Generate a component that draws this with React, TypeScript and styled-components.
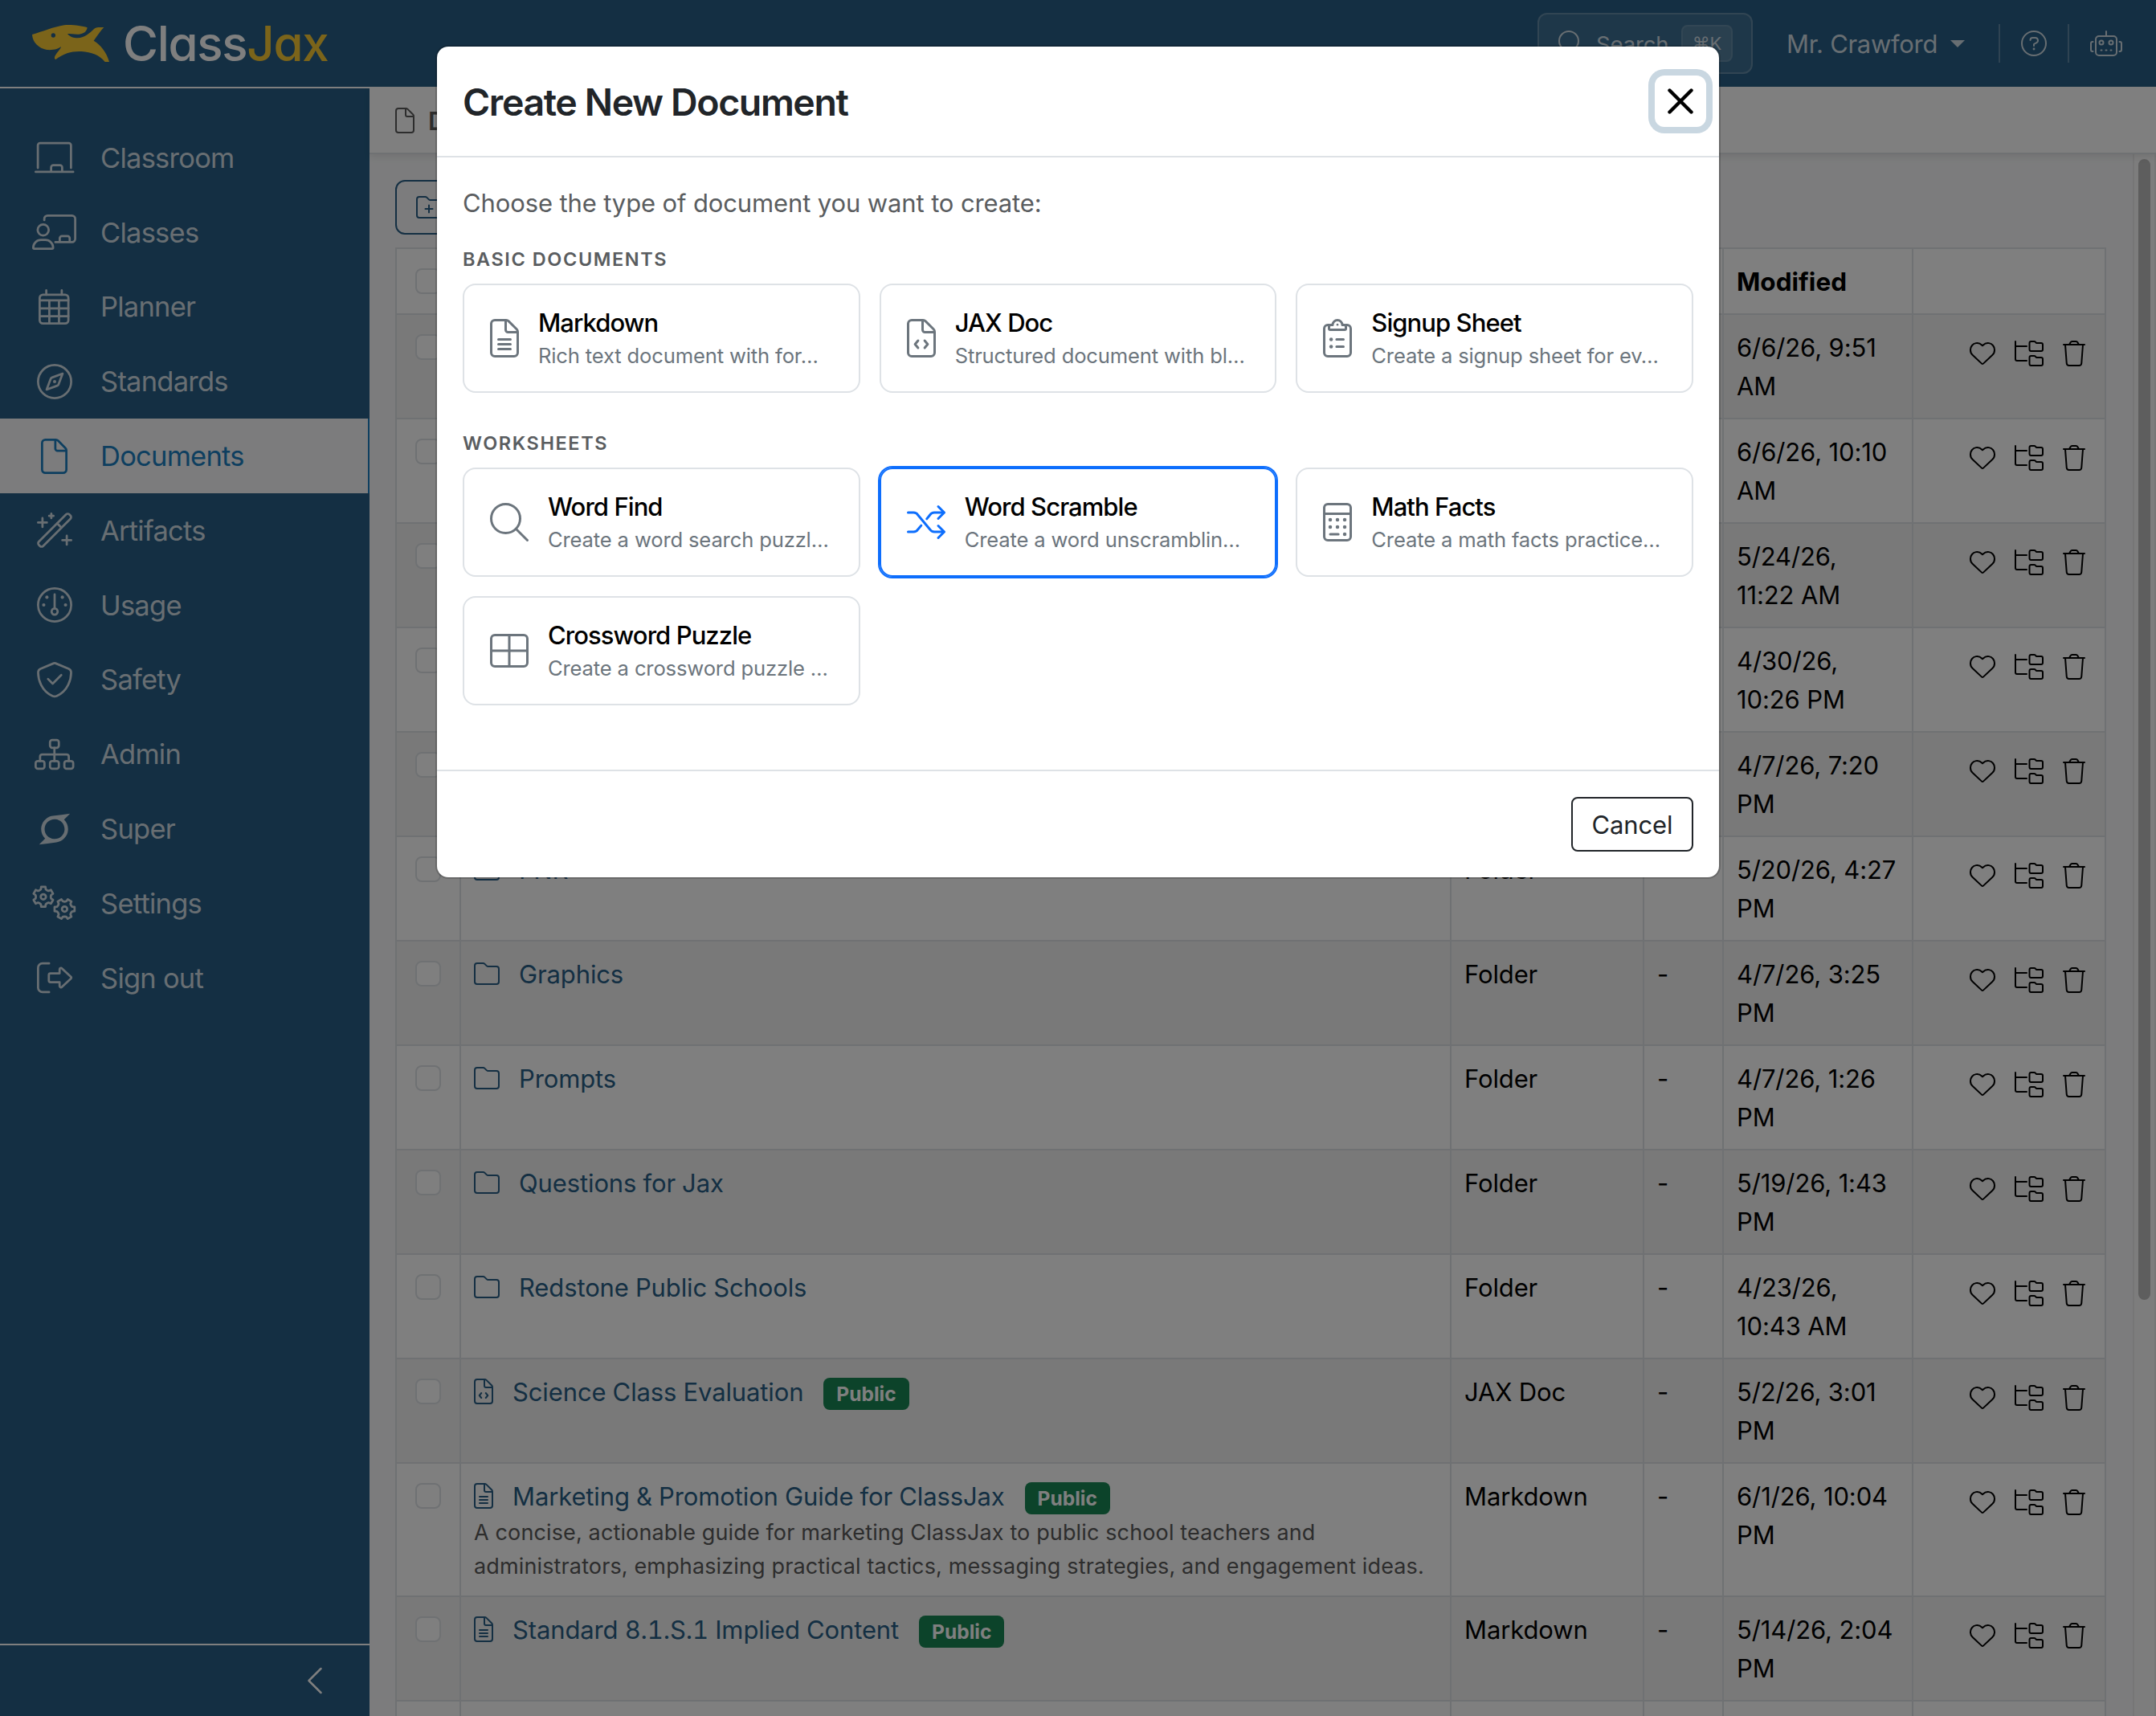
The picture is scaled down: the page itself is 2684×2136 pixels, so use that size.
import type { ReactNode } from 'react';
import styled, { createGlobalStyle, css } from 'styled-components';
import { BsChevronLeft } from 'react-icons/bs';
import { FaSuperpowers } from 'react-icons/fa';

const GlobalStyle = createGlobalStyle`
  * {
    box-sizing: border-box;
  }
  body {
    margin: 0;
    overflow: hidden;
    font-family: Inter, 'Liberation Sans', sans-serif;
    font-size: 31px;
    letter-spacing: -0.004em;
    color: #000;
    background: #f8f9fa;
  }
`;

/* ---------- icons ---------- */

const Svg = styled.svg`
  display: block;
  flex: none;
  fill: none;
  stroke: currentColor;
  stroke-width: 32;
  stroke-linecap: round;
  stroke-linejoin: round;
  overflow: visible;
  .dot {
    fill: currentColor;
    stroke: none;
  }
`;

const FILE =
  'M64 16H214a48 48 0 0 1 34 14L354 136a48 48 0 0 1 14 34V448a48 48 0 0 1-48 48H64a48 48 0 0 1-48-48V64a48 48 0 0 1 48-48zM208 16V144a32 32 0 0 0 32 32H368';
const FOLDER =
  'M64 464a48 48 0 0 1-48-48V96a48 48 0 0 1 48-48h117a48 48 0 0 1 34 14l36 36a48 48 0 0 0 34 14h163a48 48 0 0 1 48 48v256a48 48 0 0 1-48 48z';
const SMALL_FOLDER =
  'M328 208a32 32 0 0 1-32-32V48a32 32 0 0 1 32-32h62a32 32 0 0 1 24 11l12 12a32 32 0 0 0 24 9h78a32 32 0 0 1 32 32v96a32 32 0 0 1-32 32z';

function gear(cx: number, cy: number, turn: number) {
  const points: string[] = [];
  for (let i = 0; i < 6; i++) {
    [
      [-30, 108],
      [-18, 114],
      [-12, 148],
      [12, 148],
      [18, 114],
    ].forEach(([deg, r]) => {
      const a = ((i * 60 + deg + turn) * Math.PI) / 180;
      points.push(`${(cx + r * Math.sin(a)).toFixed(1)} ${(cy - r * Math.cos(a)).toFixed(1)}`);
    });
  }
  return `M${points.join('L')}z`;
}

const dots = (list: number[][], r = 24) =>
  list.map(([x, y]) => <circle key={`${x}-${y}`} className="dot" cx={x} cy={y} r={r} />);

const ICONS: Record<string, { width: number; body: ReactNode }> = {
  chalkboard: {
    width: 576,
    body: (
      <path d="M48 408V80a32 32 0 0 1 32-32H496a32 32 0 0 1 32 32V408M16 464H560M240 464V400a32 32 0 0 1 32-32h96a32 32 0 0 1 32 32v64" />
    ),
  },
  teacher: {
    width: 640,
    body: (
      <>
        <circle cx="160" cy="224" r="80" />
        <path d="M16 480c0-61 50-112 112-112h64c62 0 112 51 112 112a16 16 0 0 1-16 16H32a16 16 0 0 1-16-16zM176 80V64a48 48 0 0 1 48-48H576a48 48 0 0 1 48 48V352a48 48 0 0 1-48 48H336M400 400v-56a32 32 0 0 1 32-32h80a32 32 0 0 1 32 32v56" />
      </>
    ),
  },
  calendar: {
    width: 448,
    body: (
      <>
        <rect x="16" y="80" width="416" height="416" rx="48" />
        <path d="M16 160H432M16 277H432M16 390H432M156 160V496M296 160V496M112 16V80M336 16V80" />
      </>
    ),
  },
  compass: {
    width: 512,
    body: (
      <>
        <circle cx="256" cy="256" r="240" />
        <path d="M372 140L220 196a36 36 0 0 0-22 22L140 372L292 316a36 36 0 0 0 22-22z" />
        {dots([[256, 256]])}
      </>
    ),
  },
  file: { width: 384, body: <path d={FILE} /> },
  fileLines: {
    width: 384,
    body: <path d={`${FILE}M112 272H272M112 336H272M112 400H272`} />,
  },
  fileCode: {
    width: 384,
    body: <path d={`${FILE}M148 288l-40 48 40 48M236 288l40 48-40 48`} />,
  },
  wand: {
    width: 512,
    body: (
      <>
        <g transform="translate(256 256) rotate(-45)">
          <rect x="-312" y="-44" width="624" height="88" rx="32" />
          <path d="M96 -44V44" />
        </g>
        <path d="M80 80V208M16 144H144M208 16V80M176 48H240M432 336V464M368 400H496" />
      </>
    ),
  },
  gauge: {
    width: 512,
    body: (
      <>
        <circle cx="256" cy="256" r="240" />
        <circle cx="256" cy="352" r="44" />
        <path d="M256 104V304" />
        {dots([
          [144, 144],
          [368, 144],
          [98, 256],
          [414, 256],
        ])}
      </>
    ),
  },
  shield: {
    width: 512,
    body: (
      <path d="M269 19L460 99c20 9 35 28 35 54c-1 98-42 260-206 339a76 76 0 0 1-66 0C59 413 18 251 17 153c0-26 15-45 35-54L243 19a34 34 0 0 1 26 0zM160 246l68 68 124-124" />
    ),
  },
  sitemap: {
    width: 576,
    body: (
      <>
        <rect x="224" y="48" width="128" height="112" rx="32" />
        <rect x="16" y="352" width="128" height="112" rx="32" />
        <rect x="224" y="352" width="128" height="112" rx="32" />
        <rect x="432" y="352" width="128" height="112" rx="32" />
        <path d="M288 160V352M80 352V288a32 32 0 0 1 32-32H464a32 32 0 0 1 32 32V352" />
      </>
    ),
  },
  gears: {
    width: 640,
    body: (
      <>
        <path d={gear(162, 166, 0)} />
        <circle cx="162" cy="166" r="38" />
        <path d={gear(470, 344, 30)} />
        <circle cx="470" cy="344" r="38" />
      </>
    ),
  },
  signOut: {
    width: 512,
    body: (
      <path d="M176 48H80a64 64 0 0 0-64 64V400a64 64 0 0 0 64 64H176M328 192V136a20 20 0 0 1 34-14L490 242a20 20 0 0 1 0 28L362 390a20 20 0 0 1-34-14V320H196a24 24 0 0 1-24-24V216a24 24 0 0 1 24-24z" />
    ),
  },
  robot: {
    width: 640,
    body: (
      <>
        <rect x="112" y="112" width="416" height="384" rx="64" />
        <circle cx="224" cy="240" r="40" />
        <circle cx="416" cy="240" r="40" />
        <path d="M320 16V96M216 392h16M312 392h16M408 392h16M56 224H48a32 32 0 0 0-32 32v128a32 32 0 0 0 32 32h8M584 224h8a32 32 0 0 1 32 32v128a32 32 0 0 1-32 32h-8" />
      </>
    ),
  },
  question: {
    width: 512,
    body: (
      <>
        <circle cx="256" cy="256" r="240" />
        <path d="M184 192a48 48 0 0 1 48-48h52a52 52 0 0 1 26 97l-54 31V304" />
        {dots([[256, 368]], 23)}
      </>
    ),
  },
  search: {
    width: 512,
    body: (
      <>
        <circle cx="208" cy="208" r="192" />
        <path d="M344 344L496 496" />
      </>
    ),
  },
  folder: { width: 512, body: <path d={FOLDER} /> },
  folderPlus: { width: 512, body: <path d={`${FOLDER}M256 216V360M184 288H328`} /> },
  heart: {
    width: 512,
    body: (
      <path d="M241 458L60 289C32 263 16 226 16 187v-5C16 117 63 61 127 50c42-7 85 7 115 37l14 14 14-14c30-30 73-44 115-37C449 61 496 117 496 182v5c0 39-16 76-44 102L271 458a22 22 0 0 1-30 0z" />
    ),
  },
  folderTree: {
    width: 576,
    body: (
      <>
        <path d="M16 16V368a32 32 0 0 0 32 32H240M16 112H240" />
        <path d={SMALL_FOLDER} />
        <path d={SMALL_FOLDER} transform="translate(0 288)" />
      </>
    ),
  },
  trash: {
    width: 448,
    body: (
      <path d="M16 80H432M48 80L76 452a48 48 0 0 0 48 44H324a48 48 0 0 0 48-44L400 80M128 80l25-45a38 38 0 0 1 33-19h76a38 38 0 0 1 33 19l25 45" />
    ),
  },
  clipboard: {
    width: 384,
    body: (
      <>
        <path d="M80 80H64a48 48 0 0 0-48 48V448a48 48 0 0 0 48 48H320a48 48 0 0 0 48-48V128a48 48 0 0 0-48-48h-16M96 144a16 16 0 0 1-16-16V104a24 24 0 0 1 24-24h24a64 64 0 0 1 128 0h24a24 24 0 0 1 24 24v24a16 16 0 0 1-16 16zM180 272H272M180 368H272" />
        {dots([
          [108, 272],
          [108, 368],
        ])}
        {dots([[192, 76]], 14)}
      </>
    ),
  },
  calculator: {
    width: 384,
    body: (
      <>
        <rect x="16" y="16" width="352" height="480" rx="48" />
        <path d="M16 144H368M96 416H204" />
        {dots([
          [96, 224],
          [192, 224],
          [288, 224],
          [96, 320],
          [192, 320],
          [288, 320],
          [288, 416],
        ])}
      </>
    ),
  },
  shuffle: {
    width: 512,
    body: (
      <path d="M16 128H88c24 0 46 12 58 32L306 352c13 20 34 32 58 32H496M16 384H88c24 0 46-12 58-32L190 300M264 212L306 160c13-20 34-32 58-32H496M416 48l80 80-80 80M416 304l80 80-80 80" />
    ),
  },
  grid: {
    width: 512,
    body: (
      <>
        <rect x="16" y="48" width="480" height="416" rx="48" />
        <path d="M16 256H496M256 48V464" />
      </>
    ),
  },
};

function Icon({ name, size }: { name: string; size: number }) {
  const { width, body } = ICONS[name];
  return (
    <Svg viewBox={`0 0 ${width} 512`} width={(width / 512) * size} height={size}>
      {body}
    </Svg>
  );
}

/* ---------- page shell ---------- */

const Page = styled.div`
  position: relative;
  display: flex;
  flex-direction: column;
  width: 2684px;
  height: 2136px;
  overflow: hidden;
`;

const TopBar = styled.header`
  flex: none;
  display: flex;
  align-items: center;
  height: 108px;
  padding: 0 42px 0 40px;
  color: #d0dce4;
  background: #285f86;
`;

const Logo = styled.div`
  display: flex;
  align-items: center;
`;

const Dog = styled.svg`
  width: 96px;
  height: 46px;
`;

const Brand = styled.span`
  margin-left: 17px;
  font-size: 60px;
  font-weight: 450;
  line-height: 60px;
  letter-spacing: -0.022em;
  font-feature-settings: 'cv11';
  color: #fff;
  b {
    font-weight: 450;
    color: #f6c834;
  }
`;

const SearchBox = styled.div`
  display: flex;
  align-items: flex-start;
  width: 268px;
  height: 76px;
  margin-left: auto;
  padding: 20px 24px;
  font-size: 27.5px;
  line-height: 34px;
  border: 2px solid rgba(255, 255, 255, 0.2);
  border-radius: 12px;
  background: rgba(255, 255, 255, 0.1);
  span {
    margin-left: 15px;
  }
`;

const Kbd = styled.kbd`
  flex: none;
  width: 64px;
  height: 46px;
  margin: -7px -1px 0 auto;
  font-family: inherit;
  font-size: 22px;
  line-height: 42px;
  text-align: center;
  border: 2px solid rgba(255, 255, 255, 0.1);
  border-radius: 8px;
  background: rgba(255, 255, 255, 0.12);
`;

const UserMenu = styled.div`
  display: flex;
  align-items: center;
  justify-content: space-between;
  width: 222px;
  margin-left: 42px;
  letter-spacing: -0.01em;
`;

const Caret = styled.i`
  border: 9px solid transparent;
  border-top-color: currentColor;
  border-bottom: 0;
`;

const Divider = styled.i<{ $first?: boolean }>`
  width: 2px;
  height: 48px;
  margin: 0 26px 0 ${(props) => (props.$first ? 42 : 26)}px;
  background: rgba(255, 255, 255, 0.25);
`;

const Columns = styled.div`
  flex: 1;
  display: flex;
  min-height: 0;
`;

const Sidebar = styled.nav`
  flex: none;
  display: flex;
  flex-direction: column;
  width: 460px;
  border-top: 2px solid #fff;
  background: #285f86;
`;

const NavList = styled.ul`
  flex: 1;
  margin: 0;
  padding: 40px 0 0;
  list-style: none;
`;

const NavItem = styled.li<{ $active?: boolean }>`
  display: flex;
  align-items: center;
  height: 92.8px;
  padding-left: 40px;
  font-size: 34.5px;
  letter-spacing: -0.022em;
  color: #d0dce4;
  ${(props) =>
    props.$active &&
    css`
      color: #1c7fc0;
      background: #f8f9fa;
      border-right: 2px solid #1c7fc0;
    `}
`;

const NavIcon = styled.span`
  display: flex;
  justify-content: center;
  width: 55px;
  margin-right: 30px;
`;

const NavFooter = styled.div`
  display: flex;
  align-items: center;
  justify-content: flex-end;
  height: 90px;
  padding-right: 48px;
  color: #fff;
  border-top: 2px solid #fff;
`;

const Main = styled.main`
  flex: 1;
  display: flex;
  flex-direction: column;
  min-width: 0;
`;

const TitleBar = styled.div`
  z-index: 1;
  flex: none;
  display: flex;
  align-items: center;
  gap: 17px;
  height: 84px;
  padding: 2px 32px 0;
  font-weight: 600;
  color: #5a5a5a;
  border-bottom: 2px solid #dee2e6;
  background: #fff;
  box-shadow: 0 4px 8px rgba(0, 0, 0, 0.08);
`;

const Scroller = styled.div`
  flex: 1;
  display: flex;
  min-height: 0;
`;

const Content = styled.div`
  flex: 1;
  padding: 32px 0 0 32px;
  overflow: hidden;
`;

const Track = styled.div`
  flex: none;
  width: 29px;
  padding: 6px 5px;
  border-left: 2px solid #ececec;
  border-right: 2px solid #ececec;
  background: #fbfbfb;
`;

const Thumb = styled.div`
  height: 1420px;
  border-radius: 8px;
  background: #bcbcbc;
`;

const NewFolder = styled.button`
  display: flex;
  align-items: center;
  width: 240px;
  height: 68px;
  margin-bottom: 16px;
  padding: 0 24px;
  color: #285f86;
  border: 2px solid #285f86;
  border-radius: 12px;
  background: transparent;
`;

/* ---------- table ---------- */

const Table = styled.div`
  width: 2130px;
  border: solid #dee2e6;
  border-width: 2px 0 0 2px;
`;

const Row = styled.div<{ $striped?: boolean }>`
  display: grid;
  grid-template-columns: 80px 1233px 240px 99px 236px 240px;
  line-height: 48px;
  border-bottom: 2px solid #dee2e6;
  background: ${(props) => (props.$striped ? '#f2f2f2' : '#fff')};
`;

const Cell = styled.div`
  padding: 17px 16px 15px;
  border-right: 2px solid #dee2e6;
  white-space: pre-line;
`;

const HeadCell = styled(Cell)`
  font-size: 31.5px;
  font-weight: 700;
  letter-spacing: 0;
`;

const Checkbox = styled.i`
  display: block;
  width: 32px;
  height: 32px;
  margin: 7px auto 0;
  border: 2px solid #dee2e6;
  border-radius: 8px;
  background: #fff;
`;

const Name = styled.div`
  display: flex;
  align-items: center;
  height: 48px;
  color: #285f86;
  svg {
    margin-top: -2px;
  }
`;

const NameText = styled.span`
  margin-left: 24px;
  font-variant-numeric: tabular-nums;
`;

const Badge = styled.span`
  height: 40px;
  margin: 4px 0 0 25px;
  padding: 0 16px;
  font-size: 24.5px;
  font-weight: 700;
  line-height: 40px;
  letter-spacing: 0;
  color: #fff;
  border-radius: 8px;
  background: #198754;
`;

const Summary = styled.div`
  font-size: 27px;
  line-height: 42px;
  letter-spacing: 0.005em;
  color: #5a5a5a;
  white-space: pre;
`;

const Actions = styled.div`
  display: flex;
  justify-content: flex-end;
  gap: 24px;
  padding: 15px 8px 0 0;
`;

/* ---------- modal ---------- */

const Backdrop = styled.div`
  position: absolute;
  inset: 0;
  z-index: 10;
  display: flex;
  align-items: flex-start;
  justify-content: center;
  padding-top: 56px;
  background: rgba(0, 0, 0, 0.5);
`;

const Modal = styled.section`
  width: 1600px;
  border: 2px solid rgba(0, 0, 0, 0.175);
  border-radius: 16px;
  background: #fff;
  background-clip: padding-box;
`;

const ModalHeader = styled.div`
  display: flex;
  align-items: center;
  justify-content: space-between;
  height: 138px;
  padding: 0 16px 0 32px;
  border-bottom: 2px solid #dee2e6;
`;

const Title = styled.h5`
  margin: 2px 0 0;
  font-size: 46.5px;
  font-weight: 560;
  letter-spacing: -0.03em;
  color: #212529;
`;

const CloseButton = styled.button`
  display: flex;
  align-items: center;
  justify-content: center;
  width: 64px;
  height: 64px;
  padding: 0;
  color: #000;
  border: 0;
  border-radius: 12px;
  background: #fff;
  box-shadow: 0 0 0 8px #c9d7e1;
`;

const ModalBody = styled.div`
  height: 762px;
  padding: 33px 32px 31px;
`;

const Prompt = styled.p`
  margin: 0 0 32px;
  line-height: 48px;
  color: #5a5d60;
`;

const GroupTitle = styled.h6`
  margin: 0 0 15px;
  font-size: 23.5px;
  font-weight: 600;
  line-height: 28.8px;
  letter-spacing: 0.067em;
  color: #5a5d60;
`;

const Cards = styled.div`
  display: grid;
  grid-template-columns: repeat(3, minmax(0, 1fr));
  gap: 24px;
  margin-bottom: 49px;
`;

const Card = styled.div<{ $selected?: boolean }>`
  display: flex;
  align-items: center;
  gap: 24px;
  height: 136px;
  padding: 0 30px 0 32px;
  color: ${(props) => (props.$selected ? '#0d6efd' : '#6c757d')};
  border: 2px solid ${(props) => (props.$selected ? '#0d6efd' : '#dee2e6')};
  border-radius: 16px;
  box-shadow: ${(props) => (props.$selected ? '0 0 0 2px #0d6efd' : 'none')};
`;

const CardText = styled.div`
  padding-top: 5px;
  white-space: nowrap;
`;

const CardTitle = styled.div`
  line-height: 40px;
  font-weight: 540;
  letter-spacing: -0.03em;
  color: #000;
`;

const CardHint = styled.div`
  font-size: 25.6px;
  line-height: 42px;
  letter-spacing: -0.006em;
  color: #6c757d;
`;

const ModalFooter = styled.div`
  display: flex;
  justify-content: flex-end;
  padding: 32px;
  border-top: 2px solid #dee2e6;
`;

const CancelButton = styled.button`
  width: 152px;
  height: 68px;
  padding: 0;
  font: inherit;
  letter-spacing: inherit;
  color: #212529;
  border: 2px solid #212529;
  border-radius: 8px;
  background: #fff;
`;

/* ---------- data ---------- */

const NAV = [
  ['chalkboard', 'Classroom'],
  ['teacher', 'Classes'],
  ['calendar', 'Planner'],
  ['compass', 'Standards'],
  ['file', 'Documents'],
  ['wand', 'Artifacts'],
  ['gauge', 'Usage'],
  ['shield', 'Safety'],
  ['sitemap', 'Admin'],
  ['super', 'Super'],
  ['gears', 'Settings'],
  ['signOut', 'Sign out'],
];

type Doc = {
  name?: string;
  type?: string;
  icon?: string;
  modified: string;
  isPublic?: boolean;
  summary?: string;
};

const DOCS: Doc[] = [
  { modified: '6/6/26, 9:51\nAM' },
  { modified: '6/6/26, 10:10\nAM' },
  { modified: '5/24/26,\n11:22 AM' },
  { modified: '4/30/26,\n10:26 PM' },
  { modified: '4/7/26, 7:20\nPM' },
  { name: 'FNR', type: 'Folder', icon: 'folder', modified: '5/20/26, 4:27\nPM' },
  { name: 'Graphics', type: 'Folder', icon: 'folder', modified: '4/7/26, 3:25\nPM' },
  { name: 'Prompts', type: 'Folder', icon: 'folder', modified: '4/7/26, 1:26\nPM' },
  { name: 'Questions for Jax', type: 'Folder', icon: 'folder', modified: '5/19/26, 1:43\nPM' },
  { name: 'Redstone Public Schools', type: 'Folder', icon: 'folder', modified: '4/23/26,\n10:43 AM' },
  {
    name: 'Science Class Evaluation',
    type: 'JAX Doc',
    icon: 'fileCode',
    modified: '5/2/26, 3:01\nPM',
    isPublic: true,
  },
  {
    name: 'Marketing & Promotion Guide for ClassJax',
    type: 'Markdown',
    icon: 'fileLines',
    modified: '6/1/26, 10:04\nPM',
    isPublic: true,
    summary:
      'A concise, actionable guide for marketing ClassJax to public school teachers and\nadministrators, emphasizing practical tactics, messaging strategies, and engagement ideas.',
  },
  {
    name: 'Standard 8.1.S.1 Implied Content',
    type: 'Markdown',
    icon: 'fileLines',
    modified: '5/14/26, 2:04\nPM',
    isPublic: true,
  },
];

const GROUPS = [
  {
    title: 'BASIC DOCUMENTS',
    cards: [
      ['fileLines', 'Markdown', 'Rich text document with for…'],
      ['fileCode', 'JAX Doc', 'Structured document with bl…'],
      ['clipboard', 'Signup Sheet', 'Create a signup sheet for ev…'],
    ],
  },
  {
    title: 'WORKSHEETS',
    cards: [
      ['search', 'Word Find', 'Create a word search puzzl…'],
      ['shuffle', 'Word Scramble', 'Create a word unscramblin…'],
      ['calculator', 'Math Facts', 'Create a math facts practice…'],
      ['grid', 'Crossword Puzzle', 'Create a crossword puzzle …'],
    ],
  },
];

function DocRow({ doc, striped }: { doc: Doc; striped: boolean }) {
  return (
    <Row $striped={striped}>
      <Cell>
        <Checkbox />
      </Cell>
      <Cell>
        {doc.name && (
          <Name>
            <Icon name={doc.icon!} size={32} />
            <NameText>{doc.name}</NameText>
            {doc.isPublic && <Badge>Public</Badge>}
          </Name>
        )}
        {doc.summary && <Summary>{doc.summary}</Summary>}
      </Cell>
      <Cell>{doc.type}</Cell>
      <Cell>{doc.name && '-'}</Cell>
      <Cell>{doc.modified}</Cell>
      <Cell>
        <Actions>
          <Icon name="heart" size={32} />
          <Icon name="folderTree" size={32} />
          <Icon name="trash" size={32} />
        </Actions>
      </Cell>
    </Row>
  );
}

function CreateModal() {
  return (
    <Backdrop>
      <Modal>
        <ModalHeader>
          <Title>Create New Document</Title>
          <CloseButton>
            <svg width="32" height="32" viewBox="0 0 32 32" stroke="currentColor" strokeWidth="4.4" strokeLinecap="round">
              <path d="M2.5 2.5L29.5 29.5M29.5 2.5L2.5 29.5" />
            </svg>
          </CloseButton>
        </ModalHeader>
        <ModalBody>
          <Prompt>Choose the type of document you want to create:</Prompt>
          {GROUPS.map((group) => (
            <div key={group.title}>
              <GroupTitle>{group.title}</GroupTitle>
              <Cards>
                {group.cards.map(([icon, title, hint]) => (
                  <Card key={title} $selected={title === 'Word Scramble'}>
                    <Icon name={icon} size={48} />
                    <CardText>
                      <CardTitle>{title}</CardTitle>
                      <CardHint>{hint}</CardHint>
                    </CardText>
                  </Card>
                ))}
              </Cards>
            </div>
          ))}
        </ModalBody>
        <ModalFooter>
          <CancelButton>Cancel</CancelButton>
        </ModalFooter>
      </Modal>
    </Backdrop>
  );
}

function App() {
  return (
    <>
      <GlobalStyle />
      <Page>
        <TopBar>
          <Logo>
            <Dog viewBox="30 33 288 138">
              <path
                fill="#f6c834"
                d="M30 69C70 58 110 40 150 34C175 31 215 36 236 43C234 58 222 67 205 68C190 69 175 66 162 66C172 78 185 82 200 82C225 80 240 68 262 47C272 40 285 42 298 42C285 55 275 72 260 92C285 107 308 135 318 171L302 171C282 145 250 135 215 132C180 130 150 138 118 162C112 160 113 152 118 145C126 132 136 124 138 114C130 122 110 128 85 126C55 120 32 100 30 69z"
              />
              <circle cx="109" cy="72" r="8" fill="#285f86" />
            </Dog>
            <Brand>
              Class<b>Jax</b>
            </Brand>
          </Logo>
          <SearchBox>
            <Icon name="search" size={32} />
            <span>Search</span>
            <Kbd>⌘K</Kbd>
          </SearchBox>
          <UserMenu>
            Mr. Crawford
            <Caret />
          </UserMenu>
          <Divider $first />
          <Icon name="question" size={32} />
          <Divider />
          <Icon name="robot" size={32} />
        </TopBar>
        <Columns>
          <Sidebar>
            <NavList>
              {NAV.map(([icon, label]) => (
                <NavItem key={label} $active={label === 'Documents'}>
                  <NavIcon>{icon === 'super' ? <FaSuperpowers size={44} /> : <Icon name={icon} size={44} />}</NavIcon>
                  {label}
                </NavItem>
              ))}
            </NavList>
            <NavFooter>
              <BsChevronLeft size={40} />
            </NavFooter>
          </Sidebar>
          <Main>
            <TitleBar>
              <Icon name="file" size={32} />
              Documents
            </TitleBar>
            <Scroller>
              <Content>
                <NewFolder>
                  <Icon name="folderPlus" size={32} />
                </NewFolder>
                <Table>
                  <Row>
                    <HeadCell>
                      <Checkbox />
                    </HeadCell>
                    <HeadCell />
                    <HeadCell />
                    <HeadCell />
                    <HeadCell>Modified</HeadCell>
                    <HeadCell />
                  </Row>
                  {DOCS.map((doc, i) => (
                    <DocRow key={doc.modified} doc={doc} striped={i % 2 === 0} />
                  ))}
                  <Row>
                    <Cell>
                      <Checkbox />
                    </Cell>
                    <Cell />
                    <Cell />
                    <Cell />
                    <Cell />
                    <Cell />
                  </Row>
                </Table>
              </Content>
              <Track>
                <Thumb />
              </Track>
            </Scroller>
          </Main>
        </Columns>
        <CreateModal />
      </Page>
    </>
  );
}

export default App;
